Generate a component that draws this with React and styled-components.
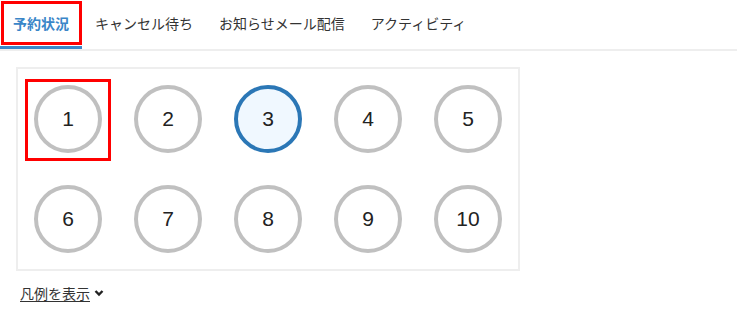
import React from "react";
import styled, { createGlobalStyle } from "styled-components";

const Global = createGlobalStyle`
  html, body { margin: 0; padding: 0; background: #fff; }
  body { font-family: "Liberation Sans", "Noto Sans CJK JP", sans-serif; color: #333; }
`;

const TabBar = styled.div`
  display: flex;
  border-bottom: 2px solid #eeeeee;
  height: 51px;
  box-sizing: border-box;
`;

const Tab = styled.div`
  position: relative;
  padding: 0 13px;
  display: flex;
  align-items: center;
  height: 46px;
  font-family: "Noto Sans CJK JP", sans-serif;
  font-size: 14px;
  font-weight: ${(p) => (p.$active ? 700 : 400)};
  color: ${(p) => (p.$active ? "#3a86c8" : "#333")};
  border-bottom: 3px solid ${(p) => (p.$active ? "#3a87c9" : "transparent")};
`;

const Highlight = styled.div`
  position: absolute;
  border: 3px solid #ff0000;
  pointer-events: none;
  box-sizing: border-box;
`;

const Content = styled.div`
  padding: 16px 16px 0 16px;
`;

const Panel = styled.div`
  display: grid;
  grid-template-columns: repeat(5, 100px);
  grid-auto-rows: 100px;
  width: max-content;
  border: 2px solid #eeeeee;
`;

const Cell = styled.div`
  position: relative;
  display: flex;
  align-items: center;
  justify-content: center;
`;

const Circle = styled.div`
  width: 68px;
  height: 68px;
  box-sizing: border-box;
  border-radius: 50%;
  border: ${(p) => (p.$selected ? "4px solid #2b77b6" : "4px solid #c0c0c0")};
  background: ${(p) => (p.$selected ? "#f0f8ff" : "#fff")};
  display: flex;
  align-items: center;
  justify-content: center;
  font-family: "Liberation Sans", Arial, sans-serif;
  font-size: 21px;
  color: #222;
`;

const Legend = styled.div`
  display: flex;
  align-items: center;
  gap: 4px;
  margin: 12px 0 0 4px;
`;

const LegendLink = styled.a`
  font-family: "Noto Sans CJK JP", sans-serif;
  font-size: 14px;
  color: #333;
  text-decoration: underline;
  text-underline-offset: 2px;
`;

export default function App() {
  const tabs = ["予約状況", "キャンセル待ち", "お知らせメール配信", "アクティビティ"];
  const nums = [1, 2, 3, 4, 5, 6, 7, 8, 9, 10];
  return (
    <>
      <Global />
      <TabBar>
        {tabs.map((t, i) => (
          <Tab key={t} $active={i === 0}>
            {t}
            {i === 0 && (
              <Highlight style={{ left: 1, top: 1, width: 81, height: 44 }} />
            )}
          </Tab>
        ))}
      </TabBar>
      <Content>
        <Panel>
          {nums.map((n) => (
            <Cell key={n}>
              <Circle $selected={n === 3}>{n}</Circle>
              {n === 1 && (
                <Highlight style={{ left: 7, top: 10, width: 86, height: 82 }} />
              )}
            </Cell>
          ))}
        </Panel>
        <Legend>
          <LegendLink>凡例を表示</LegendLink>
          <svg width="10" height="10" viewBox="0 0 10 10">
            <path d="M1.5 3 L5 6.5 L8.5 3" fill="none" stroke="#222" strokeWidth="2.4" />
          </svg>
        </Legend>
      </Content>
    </>
  );
}
